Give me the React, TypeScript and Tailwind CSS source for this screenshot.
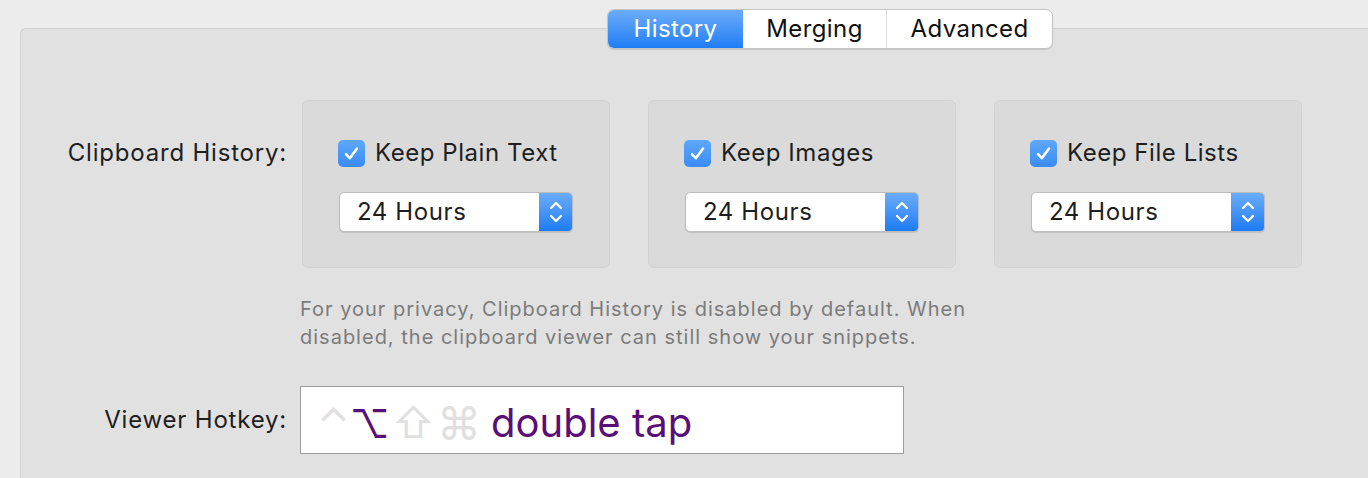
import React from "react";

const font = { fontFamily: "Inter, 'Helvetica Neue', Arial, sans-serif" };

function Check() {
  return (
    <div className="w-[27px] h-[27px] rounded-[5px] bg-gradient-to-b from-[#5ea8f9] to-[#3a8bf5] flex items-center justify-center shrink-0">
      <svg width="19" height="19" viewBox="0 0 19 19" fill="none">
        <path d="M4 10.2 L7.8 14.2 L15 4.5" stroke="white" strokeWidth="2.6" strokeLinecap="round" strokeLinejoin="round" />
      </svg>
    </div>
  );
}

function Select() {
  return (
    <div className="flex w-[234px] h-[40px] rounded-[5px] bg-white border border-[#bdbdbd] shadow-[0_1px_1px_rgba(0,0,0,0.12)] overflow-hidden">
      <div className="flex-1 flex items-center pl-[17px] text-[24px] tracking-[0.6px] text-[#1e1e1e]">24 Hours</div>
      <div className="w-[33px] bg-gradient-to-b from-[#69acf9] to-[#1a7bf5] flex items-center justify-center">
        <svg width="16" height="26" viewBox="0 0 16 26" fill="none">
          <path d="M3 9 L8 4 L13 9" stroke="white" strokeWidth="2.2" strokeLinecap="round" strokeLinejoin="round" />
          <path d="M3 17 L8 22 L13 17" stroke="white" strokeWidth="2.2" strokeLinecap="round" strokeLinejoin="round" />
        </svg>
      </div>
    </div>
  );
}

function Box({ label }: { label: string }) {
  return (
    <div className="w-[308px] h-[168px] rounded-[6px] bg-[#dadada] border border-[#d2d2d2] pl-[35px] pt-[38px]">
      <div className="flex items-center gap-[10px] h-[28px]">
        <Check />
        <span className="text-[24px] tracking-[0.55px] text-[#1e1e1e] leading-[28px]">{label}</span>
      </div>
      <div className="mt-[25px] ml-[1px]">
        <Select />
      </div>
    </div>
  );
}

export default function App() {
  return (
    <div className="w-[1368px] h-[478px] overflow-hidden bg-[#ececec]" style={font}>
      <div className="ml-[20px] mt-[28px] h-[460px] bg-[#e1e1e1] border-t border-l border-[#d0d0d0] rounded-tl-[6px]">
        <div className="flex -mt-[20px] pl-[586px]">
          <div className="flex h-[40px] rounded-[7px] border border-[#c4c4c4] bg-white shadow-[0_1px_1px_rgba(0,0,0,0.12)] overflow-hidden text-[24px] tracking-[0.4px]">
            <div className="w-[135px] flex items-center justify-center text-white bg-gradient-to-b from-[#6aacf9] to-[#1c7df5]">History</div>
            <div className="w-[144px] flex items-center justify-center text-[#111] border-r border-[#dadada]">Merging</div>
            <div className="w-[165px] flex items-center justify-center text-[#111]">Advanced</div>
          </div>
        </div>

        <div className="flex mt-[51px]">
          <div className="w-[266px] text-right text-[24px] tracking-[0.8px] text-[#1e1e1e] pt-[39px] leading-[28px] whitespace-nowrap">Clipboard History:</div>
          <div className="flex gap-[38px] ml-[15px]">
            <Box label="Keep Plain Text" />
            <Box label="Keep Images" />
            <Box label="Keep File Lists" />
          </div>
        </div>

        <div className="ml-[279px] mt-[27px] text-[20px] tracking-[1px] leading-[28px] text-[#7b7b7b] w-[760px] whitespace-nowrap">
          For your privacy, Clipboard History is disabled by default. When
          <br />
          disabled, the clipboard viewer can still show your snippets.
        </div>

        <div className="flex items-center mt-[35px]">
          <div className="w-[266px] text-right text-[24px] tracking-[0.8px] text-[#1e1e1e] whitespace-nowrap">Viewer Hotkey:</div>
          <div className="ml-[13px] w-[604px] h-[68px] bg-white border border-[#9d9d9d] flex items-center pl-[16px] pt-[6px]">
            <span className="text-[42px] text-[#e0e0e0] leading-none">⌃</span>
            <span className="text-[39px] text-[#5a0f78] leading-none">⌥</span>
            <span className="text-[42px] text-[#e0e0e0] leading-none ml-[2px]">⇧</span>
            <span className="text-[44px] text-[#e0e0e0] leading-none ml-[2px]">⌘</span>
            <span className="text-[40px] text-[#5a0f78] leading-none ml-[10px]">double tap</span>
          </div>
        </div>
      </div>
    </div>
  );
}
